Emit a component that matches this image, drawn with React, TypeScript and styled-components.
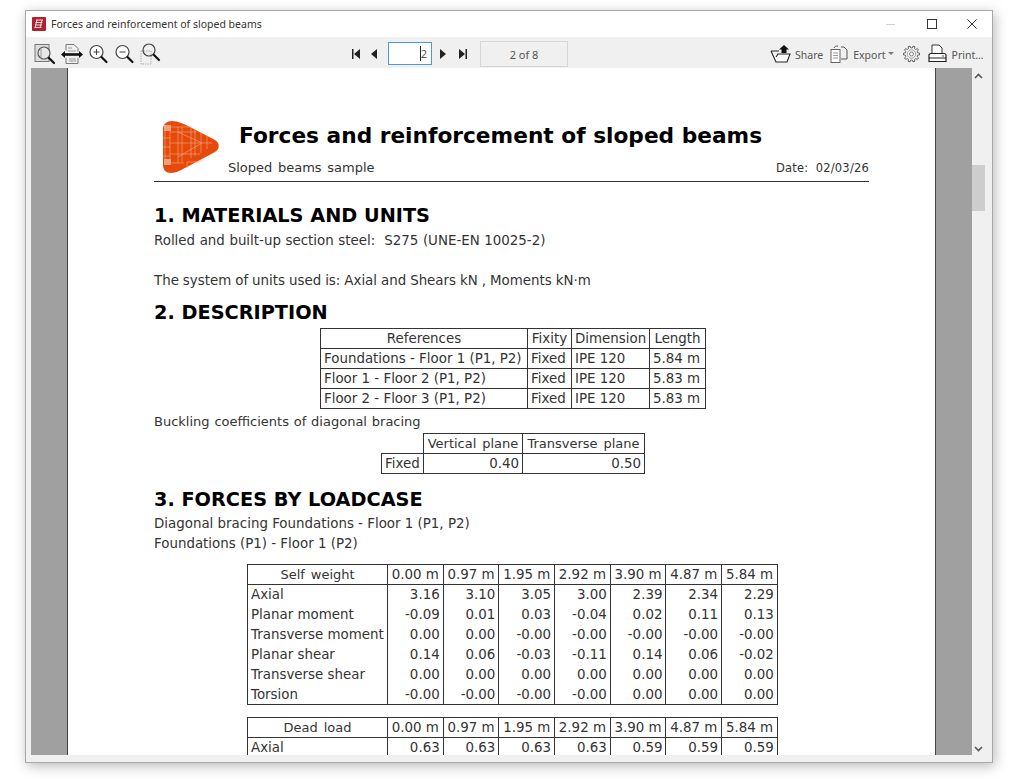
import React from "react";
import styled, { createGlobalStyle } from "styled-components";

const Global = createGlobalStyle`
  html, body { margin: 0; padding: 0; background: #fff; }
  body { width: 1024px; height: 781px; overflow: hidden; }
`;

const Stage = styled.div`
  width: 1024px;
  height: 781px;
  padding: 10px 31px 0 25px;
  box-sizing: border-box;
`;

const Win = styled.div`
  width: 968px;
  height: 753px;
  box-sizing: border-box;
  background: #f0f0f0;
  border: 1px solid #a8a8a8;
  box-shadow: 2px 3px 12px rgba(0, 0, 0, 0.28);
  display: flex;
  flex-direction: column;
  overflow: hidden;
`;

const TitleBar = styled.div`
  height: 26px;
  flex: none;
  box-sizing: border-box;
  padding: 0 0 1px 6px;
  background: #fff;
  display: flex;
  align-items: center;
  font: 10.5px "Noto Sans", "Open Sans", sans-serif;
  color: #333;
`;

const TitleText = styled.span`
  margin-left: 5px;
  flex: 1;
`;

const WinBtn = styled.div`
  width: 40px;
  height: 26px;
  display: flex;
  align-items: center;
  justify-content: center;
`;

const Toolbar = styled.div`
  height: 31px;
  flex: none;
  box-sizing: border-box;
  padding-top: 2px;
  display: flex;
  align-items: center;
  background: #f0f0f0;
  font: 10.5px "Noto Sans", "Open Sans", sans-serif;
  color: #555;
`;

const ToolGroup = styled.div`
  display: flex;
  align-items: center;
  gap: 5px;
  margin-left: 8px;
  width: 316px;
`;

const NavGroup = styled.div`
  display: flex;
  align-items: center;
`;

const NavBtn = styled.div<{ $w: number }>`
  width: ${(p) => p.$w}px;
  display: flex;
  justify-content: center;
`;

const PageInput = styled.div`
  width: 44px;
  height: 23px;
  box-sizing: border-box;
  background: #fff;
  border: 1px solid #4a9ad8;
  text-align: right;
  padding-right: 4px;
  line-height: 21px;
  font-size: 11px;
  color: #555;
`;

const Caret = styled.span`
  border-left: 1px solid #222;
`;

const PageCount = styled.div`
  width: 88px;
  height: 26px;
  margin-left: 8px;
  box-sizing: border-box;
  border: 1px solid #d6d6d6;
  line-height: 25px;
  text-align: center;
  color: #555;
  font-size: 11px;
`;

const RightGroup = styled.div`
  display: flex;
  align-items: center;
  margin-left: 202px;
`;

const ToolItem = styled.span<{ $ml: number }>`
  display: flex;
  margin-left: ${(p) => p.$ml}px;
`;

const ToolLabel = styled.span<{ $ml: number }>`
  margin-left: ${(p) => p.$ml}px;
  padding-top: 2px;
  white-space: nowrap;
`;

const Body = styled.div`
  flex: 1;
  display: flex;
  min-height: 0;
  padding-left: 5px;
`;

const Margin = styled.div<{ $side: "l" | "r" }>`
  width: 37px;
  flex: none;
  background: #a0a0a0;
  ${(p) => (p.$side === "l" ? "border-right: 1px solid #444;" : "border-left: 1px solid #444;")}
  box-sizing: border-box;
`;

const Page = styled.div`
  width: 867px;
  flex: none;
  background: #fff;
  overflow: hidden;
  padding: 0 66px 0 86px;
  box-sizing: border-box;
  font: 13.4px/20px "DejaVu Sans", sans-serif;
  color: #333;
  white-space: nowrap;
`;

const Head = styled.div`
  height: 114px;
  box-sizing: border-box;
  border-bottom: 1px solid #333;
  display: grid;
  grid-template-columns: 74px 1fr auto;
  grid-template-rows: 53px 24px;
  padding-top: 36px;
`;

const LogoBox = styled.div`
  grid-row: 1 / 3;
  padding: 16px 0 0 8px;
`;

const DocTitle = styled.div`
  grid-column: 2 / 4;
  font: bold 21.7px/32px "DejaVu Sans", sans-serif;
  color: #000;
  padding: 16px 0 0 11px;
`;

const Subtitle = styled.div`
  align-self: start;
  font-size: 13px;
  word-spacing: 1.5px;
  margin-top: 1px;
`;

const DateText = styled.div`
  align-self: start;
  font-size: 11.5px;
  word-spacing: 3.5px;
  letter-spacing: 0.2px;
  margin-top: 1px;
`;

const H1 = styled.div<{ $mt: number }>`
  margin-top: ${(p) => p.$mt}px;
  font: bold 19.3px/26px "DejaVu Sans", sans-serif;
  color: #000;
`;

const P = styled.div<{ $mt?: number; $ws?: number }>`
  margin-top: ${(p) => p.$mt ?? 0}px;
  word-spacing: ${(p) => p.$ws ?? 0}px;
  height: 20px;
`;

const TightP = styled(P)`
  font-size: 13px;
  word-spacing: 0.7px;
`;

const Table = styled.table<{ $w: number; $mt: number; $ml: number }>`
  border-collapse: collapse;
  table-layout: fixed;
  width: ${(p) => p.$w}px;
  margin: ${(p) => p.$mt}px 0 0 ${(p) => p.$ml}px;
  font: 13.4px/18px "DejaVu Sans", sans-serif;
  color: #333;
  td, th {
    font-weight: normal;
    height: 20px;
    padding: 1px 3px 0;
    box-sizing: border-box;
    overflow: hidden;
    border: 1px solid #333;
  }
`;

const Cell = styled.td<{ $a?: string; $tight?: boolean }>`
  text-align: ${(p) => p.$a ?? "left"};
  ${(p) => (p.$tight ? "font-size: 13px; word-spacing: 1.8px;" : "")}
`;

const OpenCell = styled.td<{ $a?: string; $last?: boolean }>`
  text-align: ${(p) => p.$a ?? "left"};
  && {
    border-top: none;
    border-bottom: ${(p) => (p.$last ? "1px solid #333" : "none")};
  }
`;

const Blank = styled.td`
  && {
    border-top: none;
    border-left: none;
  }
`;

const Track = styled.div`
  flex: 1;
  position: relative;
  background: #f0f0f0;
  display: flex;
  flex-direction: column;
  align-items: flex-start;
  padding: 97px 0 0 0;
`;

const Chevron = styled.svg<{ $pos: "top" | "bottom" }>`
  position: absolute;
  left: 2px;
  ${(p) => (p.$pos === "top" ? "top: 5px;" : "bottom: 3px;")}
`;

const Thumb = styled.div`
  width: 13px;
  height: 46px;
  background: #cdcdcd;
`;

const BottomStrip = styled.div`
  height: 7px;
  flex: none;
  background: #f0f0f0;
`;

const Ico = ({ w = 22, h = 22, children }: { w?: number; h?: number; children: React.ReactNode }) => (
  <svg width={w} height={h} viewBox={`0 0 ${w} ${h}`} fill="none">{children}</svg>
);

const Handle = ({ x, y }: { x: number; y: number }) => (
  <path d={`M${x} ${y}l5 5`} stroke="#111" strokeWidth="2.2" strokeLinecap="round" />
);

const Logo = () => (
  <svg width="58" height="54" viewBox="0 0 58 54" fill="none">
    <path d="M10 1C16 1 22 4 28 7L53 20C58 23 58 29 53 32L25 47C19 50 14 53 9 53C4 53 1 50 1 45V9C1 4 5 1 10 1Z" fill="#e64a0a" />
    <g stroke="#f4a988" strokeWidth="0.6">
      <path d="M3 7h26M3 7v38M8 7v38M16 7v36M20 7v35M29 7v31M33 9v27M39 12v21M45 15v14" />
      <path d="M8 12h26M8 23h42M8 34h30M8 43h14M16 12l24 11-24 14M1 18h7M1 27h7M1 36h7" />
      <path d="M25 48v-6h12l4-2" />
    </g>
    <rect x="2" y="5" width="7" height="6" fill="#f0a07c" />
    <rect x="2" y="39" width="7" height="6" fill="#f0a07c" />
  </svg>
);

const AppIcon = () => (
  <svg width="14" height="14" viewBox="0 0 14 14">
    <rect width="14" height="14" rx="1" fill="#b51f2b" />
    <path d="M4 3h7M3.500 5.500h7M3 8h7M2.500 10.500h7M5 3 3 11M10 3l-2 8" stroke="#e9e0dc" strokeWidth="1" />
  </svg>
);

const gearPath = (() => {
  const cx = 8.5;
  const cy = 9;
  const n = 10;
  const pts: string[] = [];
  for (let i = 0; i < n; i++) {
    const a = (i / n) * Math.PI * 2;
    const s = (Math.PI * 2) / n;
    const add = (r: number, o: number) =>
      pts.push(`${(cx + r * Math.cos(a + o * s)).toFixed(2)} ${(cy + r * Math.sin(a + o * s)).toFixed(2)}`);
    add(6.1, -0.5);
    add(6.2, -0.28);
    add(8, -0.2);
    add(8, 0.2);
    add(6.2, 0.28);
  }
  return `M${pts.join("L")}Z`;
})();

const Gear = () => (
  <Ico w={17} h={18}>
    <path d={gearPath} fill="#f7f7f7" stroke="#555" strokeWidth="0.9" />
    <circle cx="8.500" cy="9" r="4.200" stroke="#888" strokeWidth="0.8" />
    <circle cx="8.500" cy="9" r="2" stroke="#666" strokeWidth="0.8" />
  </Ico>
);

const selfRows: [string, string[]][] = [
  ["Axial", ["3.16", "3.10", "3.05", "3.00", "2.39", "2.34", "2.29"]],
  ["Planar moment", ["-0.09", "0.01", "0.03", "-0.04", "0.02", "0.11", "0.13"]],
  ["Transverse moment", ["0.00", "0.00", "-0.00", "-0.00", "-0.00", "-0.00", "-0.00"]],
  ["Planar shear", ["0.14", "0.06", "-0.03", "-0.11", "0.14", "0.06", "-0.02"]],
  ["Transverse shear", ["0.00", "0.00", "0.00", "0.00", "0.00", "0.00", "0.00"]],
  ["Torsion", ["-0.00", "-0.00", "-0.00", "-0.00", "0.00", "0.00", "0.00"]],
];
const stations = ["0.00 m", "0.97 m", "1.95 m", "2.92 m", "3.90 m", "4.87 m", "5.84 m"];
const descRows = [
  ["Foundations - Floor 1 (P1, P2)", "Fixed", "IPE 120", "5.84 m"],
  ["Floor 1 - Floor 2 (P1, P2)", "Fixed", "IPE 120", "5.83 m"],
  ["Floor 2 - Floor 3 (P1, P2)", "Fixed", "IPE 120", "5.83 m"],
];

const ForceCols = () => (
  <colgroup>
    <col style={{ width: 140 }} />
    {stations.map((s) => <col key={s} style={{ width: 55.7 }} />)}
  </colgroup>
);

export default function App() {
  return (
    <Stage>
      <Global />
      <Win>
        <TitleBar>
          <AppIcon />
          <TitleText>Forces and reinforcement of sloped beams</TitleText>
          <WinBtn>
            <Ico w={12} h={12}><path d="M0 6.500h9" stroke="#d0d0d0" /></Ico>
          </WinBtn>
          <WinBtn>
            <Ico w={12} h={12}><rect x="1.500" y="1.500" width="9" height="9" stroke="#333" /></Ico>
          </WinBtn>
          <WinBtn>
            <Ico w={12} h={12}><path d="M1.500 1.500l9 9M10.500 1.500l-9 9" stroke="#333" /></Ico>
          </WinBtn>
        </TitleBar>
        <Toolbar>
          <ToolGroup>
            <Ico>
              <rect x="1" y="1.500" width="14" height="17" fill="#ddd" stroke="#777" />
              <circle cx="10" cy="10" r="6" fill="#e8e8e8" stroke="#555" strokeWidth="1.200" />
              <path d="M7 4.500v11" stroke="#999" />
              <Handle x={15} y={15} />
            </Ico>
            <Ico>
              <path d="M5 1.500h8l4 4v3M5 1.500v6M5 15v5.500h12V15" stroke="#777" />
              <path d="M7 5h4M7 8h8M8 16h7M8 18h7" stroke="#999" />
              <path d="M2 11.500h18" stroke="#111" strokeWidth="2.600" />
              <path d="M0 11.500l4-3.500v7ZM22 11.500l-4-3.500v7Z" fill="#111" />
            </Ico>
            <Ico w={21}>
              <circle cx="8.500" cy="9" r="6.500" fill="#fff" stroke="#444" strokeWidth="1.200" />
              <path d="M5.500 9h6M8.500 6v6" stroke="#444" />
              <Handle x={13.500} y={14} />
            </Ico>
            <Ico w={21}>
              <circle cx="8.500" cy="9" r="6.500" fill="#fff" stroke="#444" strokeWidth="1.200" />
              <path d="M5.500 9h6" stroke="#444" />
              <Handle x={13.500} y={14} />
            </Ico>
            <Ico w={21}>
              <rect x="1" y="8" width="10" height="13" stroke="#aaa" strokeDasharray="1.500 1" />
              <circle cx="9" cy="7" r="6" stroke="#444" strokeWidth="1.200" />
              <Handle x={14} y={12} />
            </Ico>
          </ToolGroup>
          <NavGroup>
            <NavBtn $w={10}><svg width="9" height="10"><path d="M1 0h1.500v10H1ZM9 0v10L3 5Z" fill="#222" /></svg></NavBtn>
            <NavBtn $w={28}><svg width="6" height="10"><path d="M6 0v10L0 5Z" fill="#222" /></svg></NavBtn>
            <PageInput><Caret />2</PageInput>
            <NavBtn $w={22}><svg width="6" height="10"><path d="M0 0v10l6-5Z" fill="#222" /></svg></NavBtn>
            <NavBtn $w={18}><svg width="9" height="10"><path d="M0 0v10l6-5ZM6.500 0H8v10H6.500Z" fill="#222" /></svg></NavBtn>
            <PageCount>2 of 8</PageCount>
          </NavGroup>
          <RightGroup>
            <Ico w={21} h={20}>
              <path d="M1 7l5 11h11l3-8H8L6 13" stroke="#222" strokeWidth="1.100" fill="#fff" />
              <path d="M14 1l5 4.500h-2.500V9h-5V5.500H9Z" fill="#111" />
              <path d="M1 7h8" stroke="#222" />
            </Ico>
            <ToolLabel $ml={4}>Share</ToolLabel>
            <ToolItem $ml={7}>
              <Ico w={18} h={20}>
                <rect x="1" y="5.500" width="9" height="13" fill="#fff" stroke="#666" />
                <path d="M3 9h5M3 11.500h5M3 14h5" stroke="#999" />
                <path d="M11 3h3l3 3v9h-6M4 4c1-2 2-2 4-2" stroke="#555" />
              </Ico>
            </ToolItem>
            <ToolLabel $ml={5}>Export</ToolLabel>
            <ToolItem $ml={2}>
              <svg width="7" height="4"><path d="M0 0h6L3 3Z" fill="#777" /></svg>
            </ToolItem>
            <ToolItem $ml={8}><Gear /></ToolItem>
            <ToolItem $ml={8}>
              <Ico w={19} h={19}>
                <path d="M4 9V1h7l3 3v5" stroke="#333" fill="#fff" />
                <path d="M1 11.500C1 10 2 9.500 3 9.500h13c1 0 2 .5 2 2v6H1Z" fill="#fff" stroke="#222" strokeWidth="1.200" />
                <path d="M1 14h17" stroke="#222" />
                <path d="M14 12h2" stroke="#555" />
              </Ico>
            </ToolItem>
            <ToolLabel $ml={5}>Print...</ToolLabel>
          </RightGroup>
        </Toolbar>
        <Body>
          <Margin $side="l" />
          <Page>
            <Head>
              <LogoBox><Logo /></LogoBox>
              <DocTitle>Forces and reinforcement of sloped beams</DocTitle>
              <Subtitle>Sloped beams sample</Subtitle>
              <DateText>Date: 02/03/26</DateText>
            </Head>
            <H1 $mt={21}>1. MATERIALS AND UNITS</H1>
            <P $mt={2} $ws={0.3}>Rolled and built-up section steel:&nbsp; S275 (UNE-EN 10025-2)</P>
            <P $mt={20} $ws={-0.3}>The system of units used is: Axial and Shears kN , Moments kN·m</P>
            <H1 $mt={9}>2. DESCRIPTION</H1>
            <Table $w={385} $mt={2} $ml={166}>
              <colgroup>
                <col style={{ width: 207 }} />
                <col style={{ width: 44 }} />
                <col style={{ width: 78 }} />
                <col style={{ width: 56 }} />
              </colgroup>
              <tbody>
                <tr>
                  <Cell $a="center">References</Cell>
                  <Cell $a="center">Fixity</Cell>
                  <Cell $a="center">Dimension</Cell>
                  <Cell $a="center">Length</Cell>
                </tr>
                {descRows.map((r) => (
                  <tr key={r[0]}>{r.map((c, i) => <Cell key={i}>{c}</Cell>)}</tr>
                ))}
              </tbody>
            </Table>
            <TightP $mt={3}>Buckling coefficients of diagonal bracing</TightP>
            <Table $w={263} $mt={1} $ml={227}>
              <colgroup>
                <col style={{ width: 42 }} />
                <col style={{ width: 99 }} />
                <col style={{ width: 122 }} />
              </colgroup>
              <tbody>
                <tr>
                  <Blank />
                  <Cell $a="center" $tight>Vertical plane</Cell>
                  <Cell $a="center" $tight>Transverse plane</Cell>
                </tr>
                <tr>
                  <Cell>Fixed</Cell>
                  <Cell $a="right">0.40</Cell>
                  <Cell $a="right">0.50</Cell>
                </tr>
              </tbody>
            </Table>
            <H1 $mt={13}>3. FORCES BY LOADCASE</H1>
            <P $mt={1}>Diagonal bracing Foundations - Floor 1 (P1, P2)</P>
            <P>Foundations (P1) - Floor 1 (P2)</P>
            <Table $w={530} $mt={10} $ml={93}>
              <ForceCols />
              <tbody>
                <tr>
                  <Cell $a="center" $tight>Self weight</Cell>
                  {stations.map((s) => <Cell key={s} $a="center">{s}</Cell>)}
                </tr>
                {selfRows.map(([name, vals], ri) => (
                  <tr key={name}>
                    <OpenCell $last={ri === 5}>{name}</OpenCell>
                    {vals.map((v, i) => <OpenCell key={i} $a="right" $last={ri === 5}>{v}</OpenCell>)}
                  </tr>
                ))}
              </tbody>
            </Table>
            <Table $w={530} $mt={12} $ml={93}>
              <ForceCols />
              <tbody>
                <tr>
                  <Cell $a="center" $tight>Dead load</Cell>
                  {stations.map((s) => <Cell key={s} $a="center">{s}</Cell>)}
                </tr>
                <tr>
                  <OpenCell>Axial</OpenCell>
                  {["0.63", "0.63", "0.63", "0.63", "0.59", "0.59", "0.59"].map((v, i) => (
                    <OpenCell key={i} $a="right">{v}</OpenCell>
                  ))}
                </tr>
              </tbody>
            </Table>
          </Page>
          <Margin $side="r" />
          <Track>
            <Chevron $pos="top" width="9" height="6"><path d="M1 5l3.500-3.500L8 5" stroke="#555" strokeWidth="1.600" fill="none" /></Chevron>
            <Thumb />
            <Chevron $pos="bottom" width="9" height="6"><path d="M1 1l3.500 3.500L8 1" stroke="#555" strokeWidth="1.600" fill="none" /></Chevron>
          </Track>
        </Body>
        <BottomStrip />
      </Win>
    </Stage>
  );
}
